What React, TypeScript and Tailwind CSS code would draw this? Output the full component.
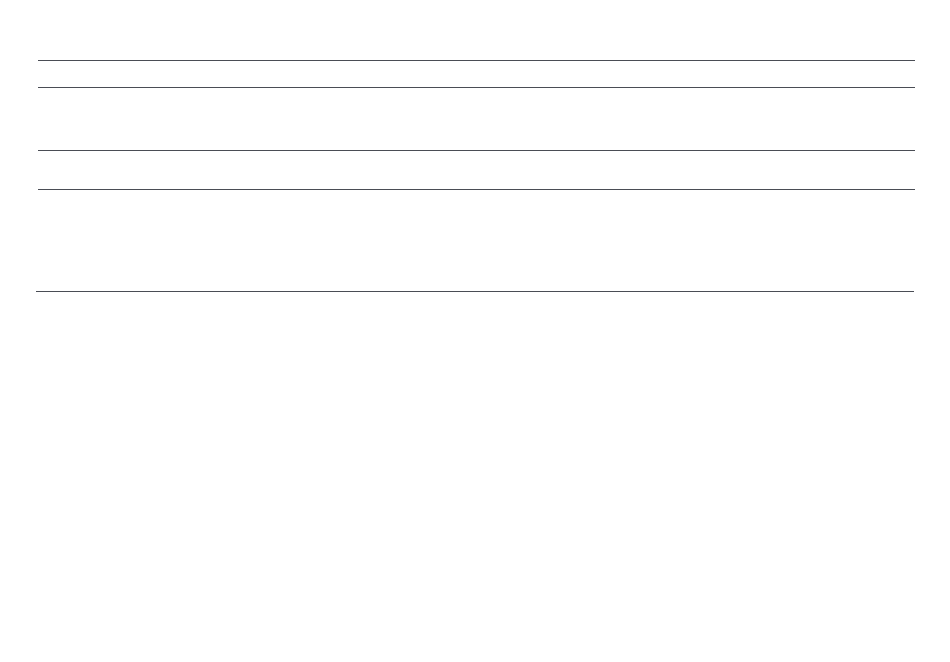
export default function App() {
  return (
    <div className="min-h-[662px] w-[950px] bg-white pt-[60px]" style={{ fontFamily: '"Liberation Sans", Arial, sans-serif' }}>
      <div className="ml-[38px] w-[877px]">
        <div className="h-[27px] border-t border-[#4a4d55]" />
        <div className="h-[63px] border-t border-[#4a4d55]" />
        <div className="h-[39px] border-t border-[#4a4d55]" />
        <div className="h-[102px] border-t border-[#4a4d55]" />
      </div>
      <div className="ml-[36px] w-[878px] border-t border-[#4a4d55]" />
    </div>
  );
}
